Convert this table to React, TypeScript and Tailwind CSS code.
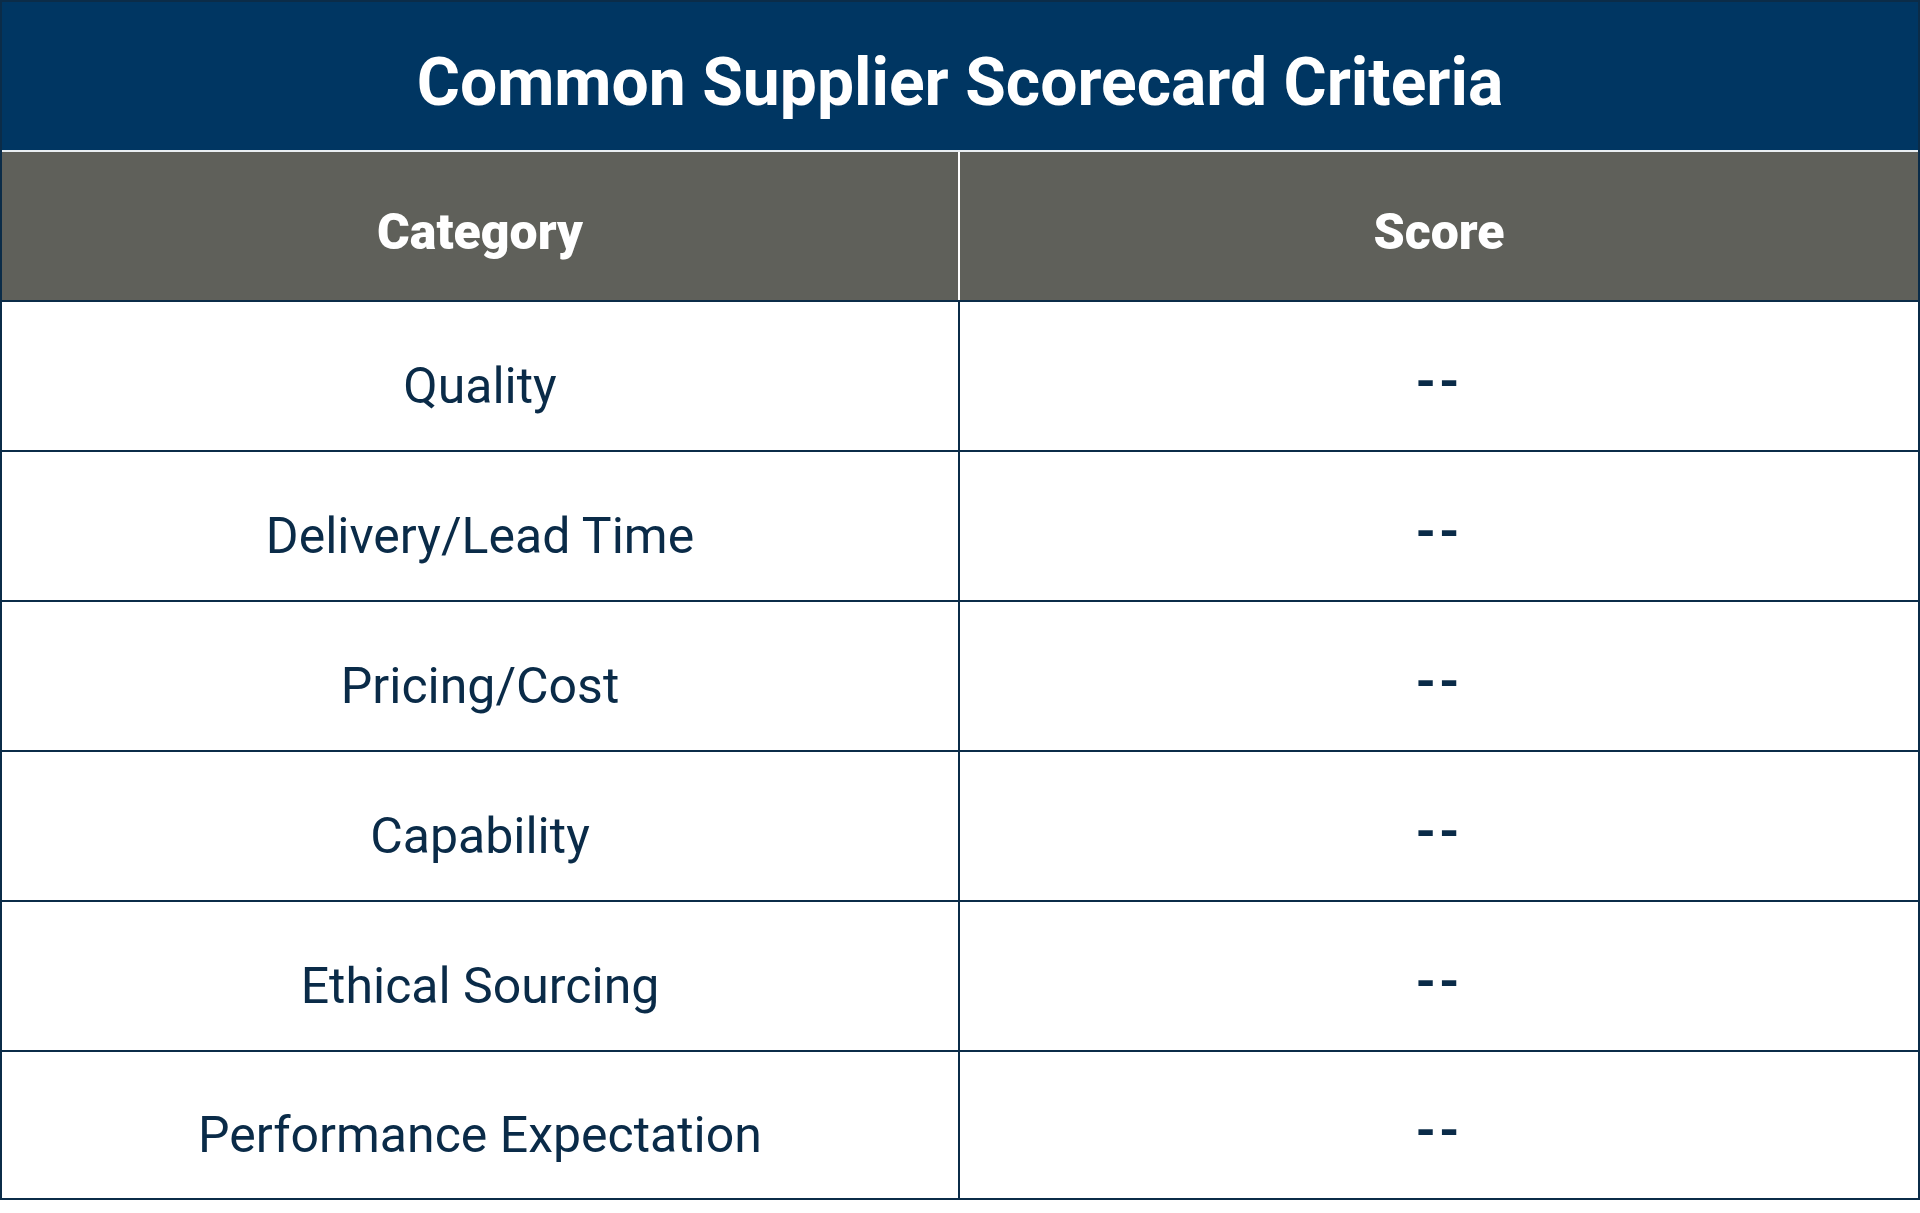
const rows = [
  "Quality",
  "Delivery/Lead Time",
  "Pricing/Cost",
  "Capability",
  "Ethical Sourcing",
  "Performance Expectation",
];

export default function App() {
  return (
    <div className="w-[1920px] h-[1213px] bg-white font-['Roboto',sans-serif]">
      <div className="border-2 border-[#0b2c48] flex flex-col">
        <div className="h-[150px] bg-[#003662] border-b-2 border-[#e9eef2] flex items-center justify-center">
          <h1 className="text-white text-[66px] font-bold leading-none pt-[13px]">
            Common Supplier Scorecard Criteria
          </h1>
        </div>
        <div className="grid grid-cols-2 h-[148px] bg-[#5f605a] text-white text-[50px] font-black leading-none">
          <div className="flex items-center justify-center border-r-2 border-white pt-[12px]">Category</div>
          <div className="flex items-center justify-center pt-[12px]">Score</div>
        </div>
        {rows.map((name, i) => (
          <div
            key={name}
            className={
              "grid grid-cols-2 border-t-2 border-[#0b2c48] text-[#0a2b48] leading-none " +
              (i === rows.length - 1 ? "h-[148px]" : "h-[150px]")
            }
          >
            <div className="flex items-center justify-center border-r-2 border-[#0b2c48] text-[50px] pt-[20px]">
              {name}
            </div>
            <div className="flex items-center justify-center text-[52px] font-bold tracking-[3px] pt-[12px]">--</div>
          </div>
        ))}
      </div>
    </div>
  );
}
